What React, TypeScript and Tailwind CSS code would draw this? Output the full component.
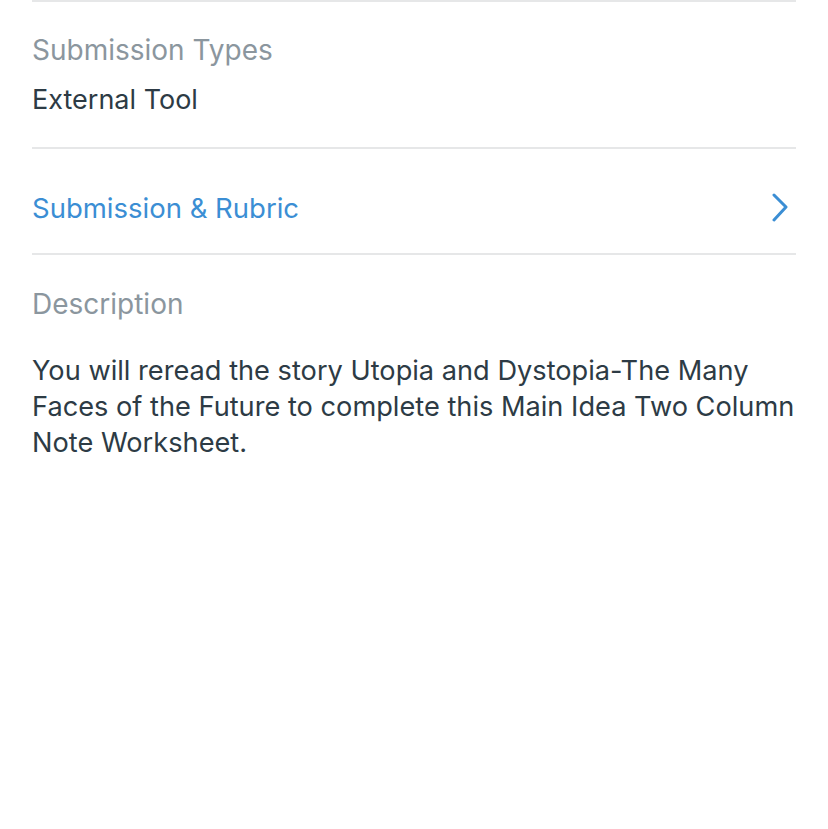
export default function App() {
  return (
    <div className="min-h-[829px] bg-white px-8 font-['Inter','Noto_Sans',sans-serif] text-[27px] leading-[36px]">
      <div className="border-t-2 border-[#e6e7e8] pt-[30px] pb-[29px]">
        <div className="text-[28px] text-[#8b969e]">Submission Types</div>
        <div className="mt-[14px] text-[#2d3b45]">External Tool</div>
      </div>
      <div className="flex items-center justify-between border-t-2 border-[#e6e7e8] pt-[41px] pb-[27px]">
        <span className="text-[27.5px] text-[#3b8ed4]">Submission &amp; Rubric</span>
        <svg width="20" height="30" viewBox="0 0 20 30" className="mr-[6px]" fill="none">
          <polyline points="4,2 16,14 4,27" stroke="#3b8ed4" strokeWidth="3" strokeLinecap="round" strokeLinejoin="round" />
        </svg>
      </div>
      <div className="border-t-2 border-[#e6e7e8] pt-[31px]">
        <div className="text-[28px] text-[#8b969e]">Description</div>
        <p className="mt-[31px] text-[27.2px] text-[#2d3b45]">
          You will reread the story Utopia and Dystopia-The Many Faces of the Future to complete this Main Idea Two
          Column Note Worksheet.
        </p>
      </div>
    </div>
  );
}
